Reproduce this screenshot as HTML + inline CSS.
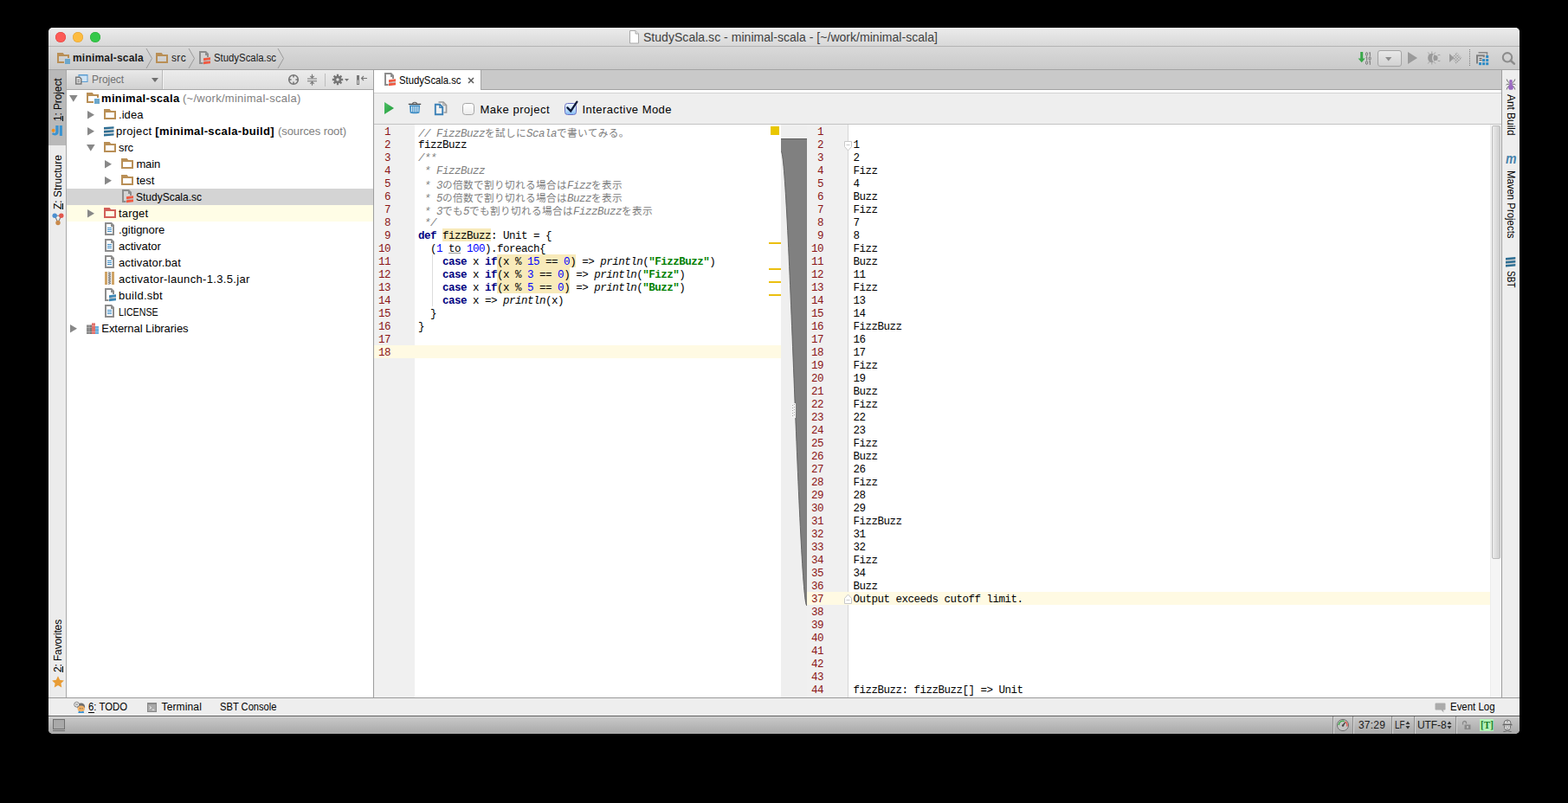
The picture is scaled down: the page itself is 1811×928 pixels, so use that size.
<!DOCTYPE html>
<html><head><meta charset="utf-8"><title>StudyScala.sc - minimal-scala</title>
<style>
html,body{margin:0;padding:0;background:#000;}
body{width:1811px;height:928px;position:relative;overflow:hidden;font-family:"Liberation Sans",sans-serif;}
.c{position:absolute;white-space:pre;font-family:"Liberation Mono",monospace;font-size:12.5px;line-height:15px;height:15px;letter-spacing:-0.5px;color:#000;}
.ln{position:absolute;white-space:pre;font-family:"Liberation Mono",monospace;font-size:12.5px;line-height:15px;height:15px;letter-spacing:-0.5px;color:#8a1414;text-align:right;}
.k{color:#000080;font-weight:bold}.n{color:#0000ff}.s{color:#008000;font-weight:bold}.cm{color:#808080;font-style:italic}.i{font-style:italic}
.j{display:inline-block;white-space:nowrap;font-family:"Liberation Sans","Noto Sans CJK JP",sans-serif;font-size:11.6px;letter-spacing:0.4px;line-height:15px;color:#808080;font-style:normal;}
.hl{}.u{text-decoration:underline;text-decoration-color:#999;text-decoration-thickness:1px;text-underline-offset:1px}
</style></head><body>
<div style="position:absolute;left:56px;top:32px;width:1699px;height:816px;background:#eeeeee;border-radius:5px;overflow:hidden;">
</div>
<div style="position:absolute;left:56px;top:32px;width:1699px;height:21px;background:linear-gradient(#ececec,#d8d8d8);border-radius:5px 5px 0 0;"></div>
<div style="position:absolute;left:56px;top:53px;width:1699px;height:1px;background:#b4b4b4;"></div>
<div style="position:absolute;left:64px;top:37px;width:12px;height:12px;border-radius:50%;background:#fc5b57;box-shadow:inset 0 0 0 0.5px #df3d39;"></div>
<div style="position:absolute;left:84px;top:37px;width:12px;height:12px;border-radius:50%;background:#fdbc40;box-shadow:inset 0 0 0 0.5px #de9f34;"></div>
<div style="position:absolute;left:104px;top:37px;width:12px;height:12px;border-radius:50%;background:#34c84a;box-shadow:inset 0 0 0 0.5px #27aa35;"></div>
<svg style="position:absolute;left:726px;top:35px;" width="13" height="16" viewBox="0 0 13 16"><path d="M1.5 0.5h6.5l3.5 3.5v11h-10z" fill="#fff" stroke="#a9a9a9" stroke-width="1"/><path d="M8 0.5v3.5h3.5" fill="#e4e4e4" stroke="#a9a9a9" stroke-width="1"/></svg>
<div style="position:absolute;white-space:pre;font-family:'Liberation Sans', sans-serif;font-size:14px;font-weight:normal;color:#404040;line-height:18px;height:18px;letter-spacing:0.036px;left:743px;top:34.0px;">StudyScala.sc - minimal-scala - [~/work/minimal-scala]</div>
<div style="position:absolute;left:56px;top:54px;width:1699px;height:26px;background:linear-gradient(#d9d9d9,#cacaca);"></div>
<div style="position:absolute;left:56px;top:80px;width:1699px;height:1px;background:#a3a3a3;"></div>
<div style="position:absolute;left:56px;top:81px;width:20px;height:725px;background:#ececec;"></div>
<div style="position:absolute;left:56px;top:81px;width:20px;height:87px;background:#b9b9b9;"></div>
<div style="position:absolute;left:76px;top:81px;width:1px;height:725px;background:#a9a9a9;"></div>
<div style="position:absolute;left:77px;top:81px;width:354px;height:22px;background:linear-gradient(#ececec,#dddddd);"></div>
<div style="position:absolute;left:77px;top:103px;width:354px;height:1px;background:#a8a8a8;"></div>
<div style="position:absolute;left:77px;top:104px;width:354px;height:702px;background:#ffffff;"></div>
<div style="position:absolute;left:431px;top:81px;width:1px;height:725px;background:#9d9d9d;"></div>
<div style="position:absolute;left:432px;top:81px;width:1302px;height:22px;background:#c9c9c9;"></div>
<div style="position:absolute;left:432px;top:103px;width:1302px;height:1px;background:#a2a2a2;"></div>
<div style="position:absolute;left:432px;top:104px;width:1302px;height:3px;background:#ffffff;"></div>
<div style="position:absolute;left:432px;top:107px;width:1302px;height:1px;background:#d2d2d2;"></div>
<div style="position:absolute;left:432px;top:108px;width:1302px;height:35px;background:#eeeeee;"></div>
<div style="position:absolute;left:432px;top:143px;width:1302px;height:1px;background:#c3c3c3;"></div>
<div style="position:absolute;left:432px;top:81px;width:123px;height:23px;background:#ffffff;"></div>
<div style="position:absolute;left:555px;top:81px;width:1px;height:22px;background:#a2a2a2;"></div>
<div style="position:absolute;left:432px;top:144px;width:47px;height:662px;background:#f0f0f0;"></div>
<div style="position:absolute;left:479px;top:144px;width:423px;height:662px;background:#ffffff;"></div>
<div style="position:absolute;left:902px;top:144px;width:30px;height:662px;background:#efefef;"></div>
<div style="position:absolute;left:932px;top:144px;width:47px;height:662px;background:#f0f0f0;"></div>
<div style="position:absolute;left:979px;top:144px;width:1px;height:662px;background:#d6d6d6;"></div>
<div style="position:absolute;left:980px;top:144px;width:741px;height:662px;background:#ffffff;"></div>
<div style="position:absolute;left:1721px;top:144px;width:13px;height:662px;background:#f5f5f5;"></div>
<div style="position:absolute;left:1721px;top:144px;width:1px;height:662px;background:#ececec;"></div>
<div style="position:absolute;left:1734px;top:81px;width:1px;height:725px;background:#9d9d9d;"></div>
<div style="position:absolute;left:1735px;top:81px;width:20px;height:725px;background:#eeeeee;"></div>
<div style="position:absolute;left:56px;top:806px;width:1699px;height:1px;background:#9a9a9a;"></div>
<div style="position:absolute;left:56px;top:807px;width:1699px;height:20px;background:#eeeeee;"></div>
<div style="position:absolute;left:56px;top:827px;width:1699px;height:1px;background:#5c5c5c;"></div>
<div style="position:absolute;left:56px;top:828px;width:1699px;height:20px;background:linear-gradient(#dadada 0,#dadada 1px,#c7c7c7 1.500px,#aaaaaa 19px,#b4b4b4 20px);border-radius:0 0 5px 5px;"></div>
<svg style="position:absolute;left:66px;top:59px;" width="16" height="16" viewBox="0 0 16 16"><path fill-rule="evenodd" d="M0 2h6.600l1.600 2H14v4H12V6H2v6h6v2H0z" fill="#b98f56"/><rect x="9" y="9" width="6" height="6" fill="#6ba7cc"/></svg>
<div style="position:absolute;white-space:pre;font-family:'Liberation Sans', sans-serif;font-size:12px;font-weight:bold;color:#1a1a1a;line-height:16px;height:16px;letter-spacing:0.202px;left:84px;top:59.0px;">minimal-scala</div>
<svg style="position:absolute;left:180px;top:59px;" width="16" height="16" viewBox="0 0 16 16"><path fill-rule="evenodd" d="M0 2h6.600l1.600 2H14v10H0zM2 6v6h10V6z" fill="#b98f56"/></svg>
<div style="position:absolute;white-space:pre;font-family:'Liberation Sans', sans-serif;font-size:12px;font-weight:normal;color:#1a1a1a;line-height:16px;height:16px;letter-spacing:0.333px;left:198px;top:59.0px;">src</div>
<svg style="position:absolute;left:229px;top:59px;" width="16" height="16" viewBox="0 0 16 16"><path fill-rule="evenodd" d="M1 0h8l3 3v4H10V5H8V2H3v11h2.500v2H1z" fill="#8d8d8d"/><path d="M6 8.200l8-1v3l-8 1zM6 12.200l8-1v3l-8 1z" fill="#f05a42"/><path d="M6 11.200l8-1v1l-8 1z" fill="#b9b9b9"/></svg>
<div style="position:absolute;white-space:pre;font-family:'Liberation Sans', sans-serif;font-size:12px;font-weight:normal;color:#1a1a1a;line-height:16px;height:16px;letter-spacing:0.000px;left:247px;top:59.0px;transform-origin:0 50%;transform:scaleX(0.9468);">StudyScala.sc</div>
<svg style="position:absolute;left:168px;top:55px;" width="9" height="25" viewBox="0 0 9 25"><path d="M1 1l6.5 11.5L1 24" fill="none" stroke="#9a9a9a" stroke-width="1"/></svg>
<svg style="position:absolute;left:217px;top:55px;" width="9" height="25" viewBox="0 0 9 25"><path d="M1 1l6.5 11.5L1 24" fill="none" stroke="#9a9a9a" stroke-width="1"/></svg>
<svg style="position:absolute;left:320px;top:55px;" width="9" height="25" viewBox="0 0 9 25"><path d="M1 1l6.5 11.5L1 24" fill="none" stroke="#9a9a9a" stroke-width="1"/></svg>
<div style="position:absolute;left:77px;top:81px;width:110px;height:22px;background:linear-gradient(#e9e9e9,#d1d1d1);"></div>
<div style="position:absolute;left:187px;top:81px;width:1px;height:22px;background:#b9b9b9;"></div>
<div style="position:absolute;left:188px;top:81px;width:1px;height:22px;background:#f2f2f2;"></div>
<svg style="position:absolute;left:86px;top:85px;" width="16" height="14" viewBox="0 0 16 14"><rect x="5" y="1.500" width="10" height="8" fill="#cfe4f5" stroke="#5a9bd0" stroke-width="1"/><rect x="5" y="1" width="10" height="1.500" fill="#5a9bd0"/><path d="M1.700 4.200h4.300l1.800 1.800v6H1.700z" fill="#dedede" stroke="#7a7a7a" stroke-width="1.500"/><path d="M3.500 7.500h2.500M3.500 9.500h2.500" stroke="#7a7a7a" stroke-width="1"/></svg>
<div style="position:absolute;white-space:pre;font-family:'Liberation Sans', sans-serif;font-size:12px;font-weight:normal;color:#707070;line-height:16px;height:16px;letter-spacing:-0.051px;left:106px;top:84.0px;">Project</div>
<svg style="position:absolute;left:175px;top:90px;" width="8" height="5" viewBox="0 0 8 5"><path d="M0 0h8l-4 5z" fill="#6e6e6e"/></svg>
<svg style="position:absolute;left:332px;top:85px;" width="14" height="14" viewBox="0 0 14 14"><circle cx="7" cy="7" r="5.300" fill="none" stroke="#767676" stroke-width="1.600"/><path d="M7 2v2.600M7 12v-2.600M2 7h2.600M12 7h-2.600" stroke="#767676" stroke-width="1.500"/></svg>
<svg style="position:absolute;left:354px;top:85px;" width="13" height="14" viewBox="0 0 13 14"><path d="M1 6h11M1 8.700h11" stroke="#767676" stroke-width="1.100"/><path d="M6.500 0.800v4.200M4.300 2.800l2.200 2.200 2.200-2.200M6.500 13.800v-4.200M4.300 11.800l2.200-2.200 2.200 2.200" fill="none" stroke="#767676" stroke-width="1.100"/></svg>
<div style="position:absolute;left:375px;top:85px;width:1px;height:15px;background:#bdbdbd;"></div>
<svg style="position:absolute;left:383px;top:85px;" width="14" height="14" viewBox="0 0 14 14"><g stroke="#767676" stroke-width="2.300"><path d="M7 0.800v12.400M0.800 7h12.400M2.600 2.600l8.800 8.800M11.400 2.600l-8.800 8.800"/></g><circle cx="7" cy="7" r="4.300" fill="#767676"/><circle cx="7" cy="7" r="1.700" fill="#e3e3e3"/></svg>
<svg style="position:absolute;left:398px;top:91px;" width="5" height="3" viewBox="0 0 5 3"><path d="M0 0h5l-2.500 3z" fill="#767676"/></svg>
<svg style="position:absolute;left:412px;top:86px;" width="13" height="13" viewBox="0 0 13 13"><rect x="0" y="1" width="3" height="11" fill="#767676"/><rect x="0.900" y="6.500" width="1.200" height="4.600" fill="#d6d6d6"/><path d="M12 4.500h-6.500M8 2l-2.500 2.500 2.500 2.500" fill="none" stroke="#767676" stroke-width="1.100"/></svg>
<div style="position:absolute;left:77px;top:218px;width:354px;height:19px;background:#d4d4d4;"></div>
<div style="position:absolute;left:77px;top:237px;width:354px;height:19px;background:#fffde6;"></div>
<svg style="position:absolute;left:80px;top:110px;" width="10" height="8" viewBox="0 0 10 8"><path d="M0 0h9.600l-4.800 7.800z" fill="#888888"/></svg>
<svg style="position:absolute;left:100px;top:105px;" width="16" height="16" viewBox="0 0 16 16"><path fill-rule="evenodd" d="M0 2h6.600l1.600 2H14v4H12V6H2v6h6v2H0z" fill="#b98f56"/><rect x="9" y="9" width="6" height="6" fill="#6ba7cc"/></svg>
<div style="position:absolute;white-space:pre;font-family:'Liberation Sans', sans-serif;font-size:13px;font-weight:bold;color:#000;line-height:17px;height:17px;letter-spacing:0.346px;left:117px;top:105.0px;">minimal-scala</div>
<div style="position:absolute;white-space:pre;font-family:'Liberation Sans', sans-serif;font-size:13px;font-weight:normal;color:#808080;line-height:17px;height:17px;letter-spacing:0.278px;left:211px;top:105.0px;">(~/work/minimal-scala)</div>
<svg style="position:absolute;left:101px;top:128px;" width="9" height="10" viewBox="0 0 9 10"><path d="M0 0v9.600l8-4.800z" fill="#888888"/></svg>
<svg style="position:absolute;left:120px;top:124px;" width="16" height="16" viewBox="0 0 16 16"><path fill-rule="evenodd" d="M0 2h6.600l1.600 2H14v10H0zM2 6v6h10V6z" fill="#b98f56"/></svg>
<div style="position:absolute;white-space:pre;font-family:'Liberation Sans', sans-serif;font-size:13px;font-weight:normal;color:#000;line-height:17px;height:17px;letter-spacing:0.059px;left:137px;top:124.0px;">.idea</div>
<svg style="position:absolute;left:101px;top:147px;" width="9" height="10" viewBox="0 0 9 10"><path d="M0 0v9.600l8-4.800z" fill="#888888"/></svg>
<svg style="position:absolute;left:120px;top:143px;" width="16" height="16" viewBox="0 0 16 16"><path d="M0 5.600l11.500-0.900v6.500l-11.500 0.900z" fill="#dcdcdc"/><path d="M0 4.100l11.500-0.900v2.400l-11.500 0.900zM0 8.100l11.500-0.900v2.400l-11.500 0.900zM0 12.100l11.500-0.900v2.400l-11.500 0.900z" fill="#2e6e93"/></svg>
<div style="position:absolute;white-space:pre;font-family:'Liberation Sans', sans-serif;font-size:13px;font-weight:normal;color:#000;line-height:17px;height:17px;letter-spacing:0.353px;left:134px;top:143.0px;">project</div>
<div style="position:absolute;white-space:pre;font-family:'Liberation Sans', sans-serif;font-size:13px;font-weight:bold;color:#000;line-height:17px;height:17px;letter-spacing:0.365px;left:179.3px;top:143.0px;">[minimal-scala-build]</div>
<div style="position:absolute;white-space:pre;font-family:'Liberation Sans', sans-serif;font-size:13px;font-weight:normal;color:#808080;line-height:17px;height:17px;letter-spacing:-0.086px;left:321px;top:143.0px;">(sources root)</div>
<svg style="position:absolute;left:100px;top:167px;" width="10" height="8" viewBox="0 0 10 8"><path d="M0 0h9.600l-4.800 7.800z" fill="#888888"/></svg>
<svg style="position:absolute;left:120px;top:162px;" width="16" height="16" viewBox="0 0 16 16"><path fill-rule="evenodd" d="M0 2h6.600l1.600 2H14v10H0zM2 6v6h10V6z" fill="#b98f56"/></svg>
<div style="position:absolute;white-space:pre;font-family:'Liberation Sans', sans-serif;font-size:13px;font-weight:normal;color:#000;line-height:17px;height:17px;letter-spacing:-0.115px;left:137px;top:162.0px;">src</div>
<svg style="position:absolute;left:121px;top:185px;" width="9" height="10" viewBox="0 0 9 10"><path d="M0 0v9.600l8-4.800z" fill="#888888"/></svg>
<svg style="position:absolute;left:140px;top:181px;" width="16" height="16" viewBox="0 0 16 16"><path fill-rule="evenodd" d="M0 2h6.600l1.600 2H14v10H0zM2 6v6h10V6z" fill="#b98f56"/></svg>
<div style="position:absolute;white-space:pre;font-family:'Liberation Sans', sans-serif;font-size:13px;font-weight:normal;color:#000;line-height:17px;height:17px;letter-spacing:-0.147px;left:157.4px;top:181.0px;">main</div>
<svg style="position:absolute;left:121px;top:204px;" width="9" height="10" viewBox="0 0 9 10"><path d="M0 0v9.600l8-4.800z" fill="#888888"/></svg>
<svg style="position:absolute;left:140px;top:200px;" width="16" height="16" viewBox="0 0 16 16"><path fill-rule="evenodd" d="M0 2h6.600l1.600 2H14v10H0zM2 6v6h10V6z" fill="#b98f56"/></svg>
<div style="position:absolute;white-space:pre;font-family:'Liberation Sans', sans-serif;font-size:13px;font-weight:normal;color:#000;line-height:17px;height:17px;letter-spacing:0.008px;left:157.4px;top:200.0px;">test</div>
<svg style="position:absolute;left:140px;top:219px;" width="16" height="16" viewBox="0 0 16 16"><path fill-rule="evenodd" d="M1 0h8l3 3v4H10V5H8V2H3v11h2.500v2H1z" fill="#8d8d8d"/><path d="M6 8.200l8-1v3l-8 1zM6 12.200l8-1v3l-8 1z" fill="#f05a42"/><path d="M6 11.200l8-1v1l-8 1z" fill="#b9b9b9"/></svg>
<div style="position:absolute;white-space:pre;font-family:'Liberation Sans', sans-serif;font-size:13px;font-weight:normal;color:#000;line-height:17px;height:17px;letter-spacing:0.000px;left:157px;top:219.0px;transform-origin:0 50%;transform:scaleX(0.9226);">StudyScala.sc</div>
<svg style="position:absolute;left:101px;top:242px;" width="9" height="10" viewBox="0 0 9 10"><path d="M0 0v9.600l8-4.800z" fill="#888888"/></svg>
<svg style="position:absolute;left:120px;top:238px;" width="16" height="16" viewBox="0 0 16 16"><path fill-rule="evenodd" d="M0 2h6.600l1.600 2H14v10H0zM2 6v6h10V6z" fill="#d25f58"/></svg>
<div style="position:absolute;white-space:pre;font-family:'Liberation Sans', sans-serif;font-size:13px;font-weight:normal;color:#000;line-height:17px;height:17px;letter-spacing:0.175px;left:137px;top:238.0px;">target</div>
<svg style="position:absolute;left:120px;top:257px;" width="16" height="16" viewBox="0 0 16 16"><path fill-rule="evenodd" d="M1 0h8l3 3v12H1zM3 2v11h7V5H8V2z" fill="#8d8d8d"/><path d="M4 6.500h5M4 8.500h5M4 10.500h5" stroke="#3d8ec9" stroke-width="1"/></svg>
<div style="position:absolute;white-space:pre;font-family:'Liberation Sans', sans-serif;font-size:13px;font-weight:normal;color:#000;line-height:17px;height:17px;letter-spacing:-0.018px;left:137px;top:257.0px;">.gitignore</div>
<svg style="position:absolute;left:120px;top:276px;" width="16" height="16" viewBox="0 0 16 16"><path fill-rule="evenodd" d="M1 0h8l3 3v12H1zM3 2v11h7V5H8V2z" fill="#8d8d8d"/><path d="M4 6.500h5M4 8.500h5M4 10.500h5" stroke="#3d8ec9" stroke-width="1"/></svg>
<div style="position:absolute;white-space:pre;font-family:'Liberation Sans', sans-serif;font-size:13px;font-weight:normal;color:#000;line-height:17px;height:17px;letter-spacing:-0.038px;left:137px;top:276.0px;">activator</div>
<svg style="position:absolute;left:120px;top:295px;" width="16" height="16" viewBox="0 0 16 16"><path fill-rule="evenodd" d="M1 0h8l3 3v12H1zM3 2v11h7V5H8V2z" fill="#8d8d8d"/><path d="M4 6.500h5M4 8.500h5M4 10.500h5" stroke="#3d8ec9" stroke-width="1"/></svg>
<div style="position:absolute;white-space:pre;font-family:'Liberation Sans', sans-serif;font-size:13px;font-weight:normal;color:#000;line-height:17px;height:17px;letter-spacing:0.145px;left:137px;top:295.0px;">activator.bat</div>
<svg style="position:absolute;left:120px;top:314px;" width="16" height="16" viewBox="0 0 16 16"><rect x="1" y="0" width="3" height="15" fill="#cfa467"/><rect x="9" y="0" width="3" height="15" fill="#cfa467"/><rect x="4" y="0" width="5" height="15" fill="#f4f4f4"/><path d="M5 0.500l3 1-3 1 3 1-3 1 3 1-3 1 3 1-3 1 3 1-3 1 3 1-3 1 3 1-3 1" fill="none" stroke="#555" stroke-width="0.700"/></svg>
<div style="position:absolute;white-space:pre;font-family:'Liberation Sans', sans-serif;font-size:13px;font-weight:normal;color:#000;line-height:17px;height:17px;letter-spacing:0.328px;left:137px;top:314.0px;">activator-launch-1.3.5.jar</div>
<svg style="position:absolute;left:120px;top:333px;" width="16" height="16" viewBox="0 0 16 16"><path fill-rule="evenodd" d="M1 0h8l3 3v4H10V5H8V2H3v11h2.500v2H1z" fill="#8d8d8d"/><path d="M6 8.200l8-1v3l-8 1zM6 12.200l8-1v3l-8 1z" fill="#3f88b5"/><path d="M6 11.200l8-1v1l-8 1z" fill="#b9b9b9"/></svg>
<div style="position:absolute;white-space:pre;font-family:'Liberation Sans', sans-serif;font-size:13px;font-weight:normal;color:#000;line-height:17px;height:17px;letter-spacing:0.286px;left:137px;top:333.0px;">build.sbt</div>
<svg style="position:absolute;left:120px;top:352px;" width="16" height="16" viewBox="0 0 16 16"><path fill-rule="evenodd" d="M1 0h8l3 3v12H1zM3 2v11h7V5H8V2z" fill="#8d8d8d"/><path d="M4 6.500h5M4 8.500h5M4 10.500h5" stroke="#3d8ec9" stroke-width="1"/></svg>
<div style="position:absolute;white-space:pre;font-family:'Liberation Sans', sans-serif;font-size:13px;font-weight:normal;color:#000;line-height:17px;height:17px;letter-spacing:0.000px;left:137px;top:352.0px;transform-origin:0 50%;transform:scaleX(0.8195);">LICENSE</div>
<svg style="position:absolute;left:81px;top:375px;" width="9" height="10" viewBox="0 0 9 10"><path d="M0 0v9.600l8-4.800z" fill="#888888"/></svg>
<svg style="position:absolute;left:100px;top:371px;" width="16" height="16" viewBox="0 0 16 16"><rect x="0" y="4.500" width="3" height="10.500" fill="#8a8a8a"/><rect x="3.200" y="4.500" width="2.800" height="10.500" fill="#7a7a7a"/><rect x="6" y="2.400" width="4" height="12.600" fill="#e0706a"/><rect x="10" y="6" width="4" height="9" fill="#6ab0de"/><path d="M0 7.500h6M0 12.500h6M6 5.500h4M6 12.500h4M10 8.500h4M10 12.500h4" stroke="#fff" stroke-opacity="0.350" stroke-width="0.800"/></svg>
<div style="position:absolute;white-space:pre;font-family:'Liberation Sans', sans-serif;font-size:13px;font-weight:normal;color:#000;line-height:17px;height:17px;letter-spacing:-0.053px;left:117.3px;top:371.0px;">External Libraries</div>
<svg style="position:absolute;left:1568px;top:58px;" width="10" height="16" viewBox="0 0 10 16"><path d="M3.200 2h3v7.600h2.600l-4.100 4.600-4.100-4.600h2.600z" fill="#3aa84a"/></svg>
<svg style="position:absolute;left:1577px;top:59.5px;" width="8" height="5" viewBox="0 0 8 5"><ellipse cx="1.50" cy="2.500" rx="1.050" ry="1.900" fill="none" stroke="#6a6a6a" stroke-width="0.900"/><path d="M4.20 1.300l1.100-0.800v4.400" fill="none" stroke="#6a6a6a" stroke-width="0.900"/></svg>
<svg style="position:absolute;left:1577px;top:64.5px;" width="8" height="5" viewBox="0 0 8 5"><path d="M0.60 1.300l1.100-0.800v4.400" fill="none" stroke="#6a6a6a" stroke-width="0.900"/><ellipse cx="5.10" cy="2.500" rx="1.050" ry="1.900" fill="none" stroke="#6a6a6a" stroke-width="0.900"/></svg>
<svg style="position:absolute;left:1577px;top:69.5px;" width="8" height="5" viewBox="0 0 8 5"><ellipse cx="1.50" cy="2.500" rx="1.050" ry="1.900" fill="none" stroke="#6a6a6a" stroke-width="0.900"/><path d="M4.20 1.300l1.100-0.800v4.400" fill="none" stroke="#6a6a6a" stroke-width="0.900"/></svg>
<div style="position:absolute;left:1591px;top:58px;width:28px;height:19px;background:linear-gradient(#e8e8e8,#d2d2d2);border:1px solid #a3a3a3;border-radius:3px;box-sizing:border-box;"></div>
<svg style="position:absolute;left:1600px;top:66px;" width="8" height="5" viewBox="0 0 8 5"><path d="M0 0h7.400l-3.700 4.400z" fill="#8c8c8c"/></svg>
<svg style="position:absolute;left:1626px;top:60px;" width="12" height="14" viewBox="0 0 12 14"><path d="M0 0v14l11-7z" fill="#9a9a9a"/></svg>
<svg style="position:absolute;left:1647px;top:59px;" width="18" height="16" viewBox="0 0 18 16"><ellipse cx="6.700" cy="8" rx="4.600" ry="5.300" fill="#9a9a9a"/><ellipse cx="11" cy="8" rx="2.600" ry="3.100" fill="#9a9a9a"/><path d="M10.700 2.500a6.500 6.500 0 0 0 0 11" fill="none" stroke="#d1d1d1" stroke-width="1.300"/><path d="M13.600 4.800q1.600-0.900 2.800 0M13.600 11.200q1.600 0.900 2.800 0" fill="none" stroke="#9a9a9a" stroke-width="0.900"/><path d="M4 3.700l-1.700-2.200M6.800 2.800v-2.300M9.300 3.500l1.500-2M4 12.300l-1.700 2.200M6.800 13.200v2.300M9.300 12.500l1.500 2" stroke="#9a9a9a" stroke-width="0.900" fill="none"/></svg>
<svg style="position:absolute;left:1673px;top:60px;" width="16" height="14" viewBox="0 0 16 14"><defs><pattern id="chk" width="2.400" height="2.400" patternUnits="userSpaceOnUse" patternTransform="rotate(45)"><rect width="1.500" height="1.500" fill="#9a9a9a"/></pattern></defs><path d="M1 2v10l5.500-5z" fill="#9a9a9a"/><path d="M9 0l6.500 7-6.500 7-5-7z" fill="url(#chk)"/></svg>
<div style="position:absolute;left:1697px;top:57px;width:1px;height:1px;background:#7d7d7d;"></div>
<div style="position:absolute;left:1697px;top:59px;width:1px;height:1px;background:#7d7d7d;"></div>
<div style="position:absolute;left:1697px;top:61px;width:1px;height:1px;background:#7d7d7d;"></div>
<div style="position:absolute;left:1697px;top:63px;width:1px;height:1px;background:#7d7d7d;"></div>
<div style="position:absolute;left:1697px;top:65px;width:1px;height:1px;background:#7d7d7d;"></div>
<div style="position:absolute;left:1697px;top:67px;width:1px;height:1px;background:#7d7d7d;"></div>
<div style="position:absolute;left:1697px;top:69px;width:1px;height:1px;background:#7d7d7d;"></div>
<div style="position:absolute;left:1697px;top:71px;width:1px;height:1px;background:#7d7d7d;"></div>
<div style="position:absolute;left:1697px;top:73px;width:1px;height:1px;background:#7d7d7d;"></div>
<div style="position:absolute;left:1697px;top:75px;width:1px;height:1px;background:#7d7d7d;"></div>
<svg style="position:absolute;left:1704px;top:59px;" width="17" height="17" viewBox="0 0 17 17"><path d="M3.500 1.700h10v3" fill="none" stroke="#888" stroke-width="1.500"/><path d="M2 14.500v-9.200h7.800v2" fill="none" stroke="#808080" stroke-width="2"/><path d="M4.500 8.500h3M4.500 10.500h3" stroke="#555" stroke-width="1"/><g fill="#2b8ac6"><rect x="12.200" y="5" width="3" height="3"/><rect x="8.100" y="9.100" width="3" height="3"/><rect x="12.200" y="9.100" width="3" height="3"/><rect x="4" y="13.200" width="3" height="3"/><rect x="8.100" y="13.200" width="3" height="3"/><rect x="12.200" y="13.200" width="3" height="3"/></g></svg>
<svg style="position:absolute;left:1734px;top:59px;" width="17" height="17" viewBox="0 0 17 17"><circle cx="7" cy="7.300" r="5.200" fill="none" stroke="#8c8c8c" stroke-width="2.100"/><path d="M10.800 11l4 3.600" stroke="#8c8c8c" stroke-width="2.600" stroke-linecap="round"/></svg>
<svg style="position:absolute;left:443px;top:84px;" width="16" height="16" viewBox="0 0 16 16"><path fill-rule="evenodd" d="M1 0h8l3 3v4H10V5H8V2H3v11h2.500v2H1z" fill="#8d8d8d"/><path d="M6 8.200l8-1v3l-8 1zM6 12.200l8-1v3l-8 1z" fill="#f05a42"/><path d="M6 11.200l8-1v1l-8 1z" fill="#b9b9b9"/></svg>
<div style="position:absolute;white-space:pre;font-family:'Liberation Sans', sans-serif;font-size:12px;font-weight:normal;color:#000;line-height:16px;height:16px;letter-spacing:0.000px;left:461px;top:84.5px;transform-origin:0 50%;transform:scaleX(0.9402);">StudyScala.sc</div>
<svg style="position:absolute;left:540px;top:89px;" width="8" height="8" viewBox="0 0 8 8"><path d="M1 1l6 6M7 1l-6 6" stroke="#5a5a5a" stroke-width="1.500"/></svg>
<svg style="position:absolute;left:444px;top:118px;" width="11" height="14" viewBox="0 0 11 14"><defs><linearGradient id="pg" x1="0" y1="0" x2="1" y2="1"><stop offset="0" stop-color="#4fc068"/><stop offset="1" stop-color="#1d9a36"/></linearGradient></defs><path d="M0 0v14l11-7z" fill="url(#pg)"/></svg>
<svg style="position:absolute;left:471px;top:116px;" width="16" height="17" viewBox="0 0 16 17"><path d="M5.700 4c0-2.300 4.600-2.300 4.600 0" fill="none" stroke="#5a5a5a" stroke-width="1.100"/><path d="M0.800 4.400h14.400" stroke="#4a4a4a" stroke-width="1.300"/><path d="M2 5.600h12l-0.600 8.600c-0.100 1.500-10.700 1.500-10.800 0z" fill="#3f8dc4"/><path d="M4.600 7v6.300M7 7v6.600M9.400 7v6.600M11.700 7v6.300" stroke="#eaf3fa" stroke-width="1.150"/></svg>
<svg style="position:absolute;left:501px;top:116px;" width="16" height="18" viewBox="0 0 16 18"><path d="M5.500 2h5.500l3.500 3.500v8.500h-3" fill="none" stroke="#9c9c9c" stroke-width="1.700"/><path d="M10.800 2.300v3.400h3.400" fill="none" stroke="#9c9c9c" stroke-width="1"/><path d="M1.800 4.800h5.200l3.200 3.200v8.200H1.800z" fill="#f1f1f1" stroke="#3b80b6" stroke-width="1.900"/><path d="M6.800 5v3.400h3.400" fill="none" stroke="#3b80b6" stroke-width="1.200"/></svg>
<div style="position:absolute;left:534px;top:119px;width:14px;height:14px;background:linear-gradient(#ffffff,#ececec);border:1px solid #a5a5a5;border-radius:3.500px;box-sizing:border-box;"></div>
<div style="position:absolute;white-space:pre;font-family:'Liberation Sans', sans-serif;font-size:13px;font-weight:normal;color:#000;line-height:17px;height:17px;letter-spacing:0.507px;left:554.5px;top:118.0px;">Make project</div>
<div style="position:absolute;left:652px;top:119px;width:14px;height:14px;background:linear-gradient(#eef6ff,#cfe5fb 45%,#86bdf4);border:1px solid #686fc4;border-radius:3.500px;box-sizing:border-box;"></div>
<svg style="position:absolute;left:652px;top:114px;" width="17" height="19" viewBox="0 0 17 19"><path d="M3.300 10.400L7.200 14.400L14.400 3.700" fill="none" stroke="#0c1838" stroke-width="2.300" stroke-linecap="round" stroke-linejoin="miter"/></svg>
<div style="position:absolute;white-space:pre;font-family:'Liberation Sans', sans-serif;font-size:13px;font-weight:normal;color:#000;line-height:17px;height:17px;letter-spacing:0.462px;left:672.5px;top:118.0px;">Interactive Mode</div>
<div style="position:absolute;left:432px;top:399px;width:470px;height:15px;background:#fffae3;"></div>
<div style="position:absolute;left:932px;top:684px;width:789px;height:15px;background:#fffae3;"></div>
<div style="position:absolute;left:511px;top:264px;width:56px;height:15px;background:#f8eaba;"></div>
<div style="position:absolute;left:574px;top:294px;width:91px;height:15px;background:#f8eaba;"></div>
<div style="position:absolute;left:574px;top:309px;width:84px;height:30px;background:#f8eaba;"></div>
<div style="position:absolute;left:499px;top:294px;width:1px;height:60px;background:#dcdcdc;"></div>
<div class="ln" style="left:421px;width:30px;top:146px;">1</div>
<div class="ln" style="left:421px;width:30px;top:161px;">2</div>
<div class="ln" style="left:421px;width:30px;top:176px;">3</div>
<div class="ln" style="left:421px;width:30px;top:191px;">4</div>
<div class="ln" style="left:421px;width:30px;top:206px;">5</div>
<div class="ln" style="left:421px;width:30px;top:221px;">6</div>
<div class="ln" style="left:421px;width:30px;top:236px;">7</div>
<div class="ln" style="left:421px;width:30px;top:251px;">8</div>
<div class="ln" style="left:421px;width:30px;top:266px;">9</div>
<div class="ln" style="left:421px;width:30px;top:281px;">10</div>
<div class="ln" style="left:421px;width:30px;top:296px;">11</div>
<div class="ln" style="left:421px;width:30px;top:311px;">12</div>
<div class="ln" style="left:421px;width:30px;top:326px;">13</div>
<div class="ln" style="left:421px;width:30px;top:341px;">14</div>
<div class="ln" style="left:421px;width:30px;top:356px;">15</div>
<div class="ln" style="left:421px;width:30px;top:371px;">16</div>
<div class="ln" style="left:421px;width:30px;top:386px;">17</div>
<div class="ln" style="left:421px;width:30px;top:401px;">18</div>
<div class="ln" style="left:921px;width:30px;top:146px;">1</div>
<div class="ln" style="left:921px;width:30px;top:161px;">2</div>
<div class="ln" style="left:921px;width:30px;top:176px;">3</div>
<div class="ln" style="left:921px;width:30px;top:191px;">4</div>
<div class="ln" style="left:921px;width:30px;top:206px;">5</div>
<div class="ln" style="left:921px;width:30px;top:221px;">6</div>
<div class="ln" style="left:921px;width:30px;top:236px;">7</div>
<div class="ln" style="left:921px;width:30px;top:251px;">8</div>
<div class="ln" style="left:921px;width:30px;top:266px;">9</div>
<div class="ln" style="left:921px;width:30px;top:281px;">10</div>
<div class="ln" style="left:921px;width:30px;top:296px;">11</div>
<div class="ln" style="left:921px;width:30px;top:311px;">12</div>
<div class="ln" style="left:921px;width:30px;top:326px;">13</div>
<div class="ln" style="left:921px;width:30px;top:341px;">14</div>
<div class="ln" style="left:921px;width:30px;top:356px;">15</div>
<div class="ln" style="left:921px;width:30px;top:371px;">16</div>
<div class="ln" style="left:921px;width:30px;top:386px;">17</div>
<div class="ln" style="left:921px;width:30px;top:401px;">18</div>
<div class="ln" style="left:921px;width:30px;top:416px;">19</div>
<div class="ln" style="left:921px;width:30px;top:431px;">20</div>
<div class="ln" style="left:921px;width:30px;top:446px;">21</div>
<div class="ln" style="left:921px;width:30px;top:461px;">22</div>
<div class="ln" style="left:921px;width:30px;top:476px;">23</div>
<div class="ln" style="left:921px;width:30px;top:491px;">24</div>
<div class="ln" style="left:921px;width:30px;top:506px;">25</div>
<div class="ln" style="left:921px;width:30px;top:521px;">26</div>
<div class="ln" style="left:921px;width:30px;top:536px;">27</div>
<div class="ln" style="left:921px;width:30px;top:551px;">28</div>
<div class="ln" style="left:921px;width:30px;top:566px;">29</div>
<div class="ln" style="left:921px;width:30px;top:581px;">30</div>
<div class="ln" style="left:921px;width:30px;top:596px;">31</div>
<div class="ln" style="left:921px;width:30px;top:611px;">32</div>
<div class="ln" style="left:921px;width:30px;top:626px;">33</div>
<div class="ln" style="left:921px;width:30px;top:641px;">34</div>
<div class="ln" style="left:921px;width:30px;top:656px;">35</div>
<div class="ln" style="left:921px;width:30px;top:671px;">36</div>
<div class="ln" style="left:921px;width:30px;top:686px;">37</div>
<div class="ln" style="left:921px;width:30px;top:701px;">38</div>
<div class="ln" style="left:921px;width:30px;top:716px;">39</div>
<div class="ln" style="left:921px;width:30px;top:731px;">40</div>
<div class="ln" style="left:921px;width:30px;top:746px;">41</div>
<div class="ln" style="left:921px;width:30px;top:761px;">42</div>
<div class="ln" style="left:921px;width:30px;top:776px;">43</div>
<div class="ln" style="left:921px;width:30px;top:791px;">44</div>
<div class="c" style="left:483px;top:146px;"><span class="cm">// FizzBuzz</span><span class="j" style="width:48px">を試しに</span><span class="cm">Scala</span><span class="j" style="width:84px">で書いてみる。</span></div>
<div class="c" style="left:483px;top:161px;"><span>fizzBuzz</span></div>
<div class="c" style="left:483px;top:176px;"><span class="cm">/</span><span class="cm" style="display:inline-block;width:14.0px">**</span></div>
<div class="c" style="left:483px;top:191px;"><span class="cm"> </span><span class="cm" style="display:inline-block;width:7.0px">*</span><span class="cm"> FizzBuzz</span></div>
<div class="c" style="left:483px;top:206px;"><span class="cm"> </span><span class="cm" style="display:inline-block;width:7.0px">*</span><span class="cm"> 3</span><span class="j" style="width:144px">の倍数で割り切れる場合は</span><span class="cm">Fizz</span><span class="j" style="width:36px">を表示</span></div>
<div class="c" style="left:483px;top:221px;"><span class="cm"> </span><span class="cm" style="display:inline-block;width:7.0px">*</span><span class="cm"> 5</span><span class="j" style="width:144px">の倍数で割り切れる場合は</span><span class="cm">Buzz</span><span class="j" style="width:36px">を表示</span></div>
<div class="c" style="left:483px;top:236px;"><span class="cm"> </span><span class="cm" style="display:inline-block;width:7.0px">*</span><span class="cm"> 3</span><span class="j" style="width:24px">でも</span><span class="cm">5</span><span class="j" style="width:120px">でも割り切れる場合は</span><span class="cm">FizzBuzz</span><span class="j" style="width:36px">を表示</span></div>
<div class="c" style="left:483px;top:251px;"><span class="cm"> </span><span class="cm" style="display:inline-block;width:7.0px">*</span><span class="cm">/</span></div>
<div class="c" style="left:483px;top:266px;"><span class="k">def</span><span> </span><span class="hl">fizzBuzz</span><span>: Unit = {</span></div>
<div class="c" style="left:483px;top:281px;"><span>  (</span><span class="n">1</span><span> </span><span class="u">to</span><span> </span><span class="n">100</span><span>).foreach{</span></div>
<div class="c" style="left:483px;top:296px;"><span>    </span><span class="k">case</span><span> x </span><span class="k">if</span><span class="hl">(x % </span><span class="hl n">15</span><span class="hl"> == </span><span class="hl n">0</span><span class="hl">)</span><span> =&gt; </span><span class="i">println</span><span>(</span><span class="s">&quot;FizzBuzz&quot;</span><span>)</span></div>
<div class="c" style="left:483px;top:311px;"><span>    </span><span class="k">case</span><span> x </span><span class="k">if</span><span class="hl">(x % </span><span class="hl n">3</span><span class="hl"> == </span><span class="hl n">0</span><span class="hl">)</span><span> =&gt; </span><span class="i">println</span><span>(</span><span class="s">&quot;Fizz&quot;</span><span>)</span></div>
<div class="c" style="left:483px;top:326px;"><span>    </span><span class="k">case</span><span> x </span><span class="k">if</span><span class="hl">(x % </span><span class="hl n">5</span><span class="hl"> == </span><span class="hl n">0</span><span class="hl">)</span><span> =&gt; </span><span class="i">println</span><span>(</span><span class="s">&quot;Buzz&quot;</span><span>)</span></div>
<div class="c" style="left:483px;top:341px;"><span>    </span><span class="k">case</span><span> x =&gt; </span><span class="i">println</span><span>(x)</span></div>
<div class="c" style="left:483px;top:356px;"><span>  }</span></div>
<div class="c" style="left:483px;top:371px;"><span>}</span></div>
<div class="c" style="left:985.5px;top:161px;"><span>1</span></div>
<div class="c" style="left:985.5px;top:176px;"><span>2</span></div>
<div class="c" style="left:985.5px;top:191px;"><span>Fizz</span></div>
<div class="c" style="left:985.5px;top:206px;"><span>4</span></div>
<div class="c" style="left:985.5px;top:221px;"><span>Buzz</span></div>
<div class="c" style="left:985.5px;top:236px;"><span>Fizz</span></div>
<div class="c" style="left:985.5px;top:251px;"><span>7</span></div>
<div class="c" style="left:985.5px;top:266px;"><span>8</span></div>
<div class="c" style="left:985.5px;top:281px;"><span>Fizz</span></div>
<div class="c" style="left:985.5px;top:296px;"><span>Buzz</span></div>
<div class="c" style="left:985.5px;top:311px;"><span>11</span></div>
<div class="c" style="left:985.5px;top:326px;"><span>Fizz</span></div>
<div class="c" style="left:985.5px;top:341px;"><span>13</span></div>
<div class="c" style="left:985.5px;top:356px;"><span>14</span></div>
<div class="c" style="left:985.5px;top:371px;"><span>FizzBuzz</span></div>
<div class="c" style="left:985.5px;top:386px;"><span>16</span></div>
<div class="c" style="left:985.5px;top:401px;"><span>17</span></div>
<div class="c" style="left:985.5px;top:416px;"><span>Fizz</span></div>
<div class="c" style="left:985.5px;top:431px;"><span>19</span></div>
<div class="c" style="left:985.5px;top:446px;"><span>Buzz</span></div>
<div class="c" style="left:985.5px;top:461px;"><span>Fizz</span></div>
<div class="c" style="left:985.5px;top:476px;"><span>22</span></div>
<div class="c" style="left:985.5px;top:491px;"><span>23</span></div>
<div class="c" style="left:985.5px;top:506px;"><span>Fizz</span></div>
<div class="c" style="left:985.5px;top:521px;"><span>Buzz</span></div>
<div class="c" style="left:985.5px;top:536px;"><span>26</span></div>
<div class="c" style="left:985.5px;top:551px;"><span>Fizz</span></div>
<div class="c" style="left:985.5px;top:566px;"><span>28</span></div>
<div class="c" style="left:985.5px;top:581px;"><span>29</span></div>
<div class="c" style="left:985.5px;top:596px;"><span>FizzBuzz</span></div>
<div class="c" style="left:985.5px;top:611px;"><span>31</span></div>
<div class="c" style="left:985.5px;top:626px;"><span>32</span></div>
<div class="c" style="left:985.5px;top:641px;"><span>Fizz</span></div>
<div class="c" style="left:985.5px;top:656px;"><span>34</span></div>
<div class="c" style="left:985.5px;top:671px;"><span>Buzz</span></div>
<div class="c" style="left:985.5px;top:686px;"><span>Output exceeds cutoff limit.</span></div>
<div class="c" style="left:985.5px;top:791px;"><span>fizzBuzz: fizzBuzz[] =&gt; Unit</span></div>
<div style="position:absolute;left:890px;top:146px;width:10px;height:10px;background:#e9c700;"></div>
<div style="position:absolute;left:888px;top:280px;width:14px;height:2px;background:#ebbf10;"></div>
<div style="position:absolute;left:888px;top:310px;width:14px;height:2px;background:#ebbf10;"></div>
<div style="position:absolute;left:888px;top:325px;width:14px;height:2px;background:#ebbf10;"></div>
<div style="position:absolute;left:888px;top:340px;width:14px;height:2px;background:#ebbf10;"></div>
<svg style="position:absolute;left:902px;top:144px;" width="30" height="662" viewBox="0 0 30 662"><path d="M0 16H30V556C21 556 9 31 0 31Z" fill="#808080"/><path d="M0 16.500H30M30 556C21 556 9 31 0 31" fill="none" stroke="#5c5c5c" stroke-width="0.900"/><rect x="12" y="322" width="5" height="17" fill="#f3f3f3"/><g fill="#a6a6a6"><rect x="13" y="324" width="1" height="1"/><rect x="13" y="327" width="1" height="1"/><rect x="13" y="330" width="1" height="1"/><rect x="13" y="333" width="1" height="1"/><rect x="13" y="336" width="1" height="1"/><rect x="15" y="323" width="1" height="1"/><rect x="15" y="326" width="1" height="1"/><rect x="15" y="329" width="1" height="1"/><rect x="15" y="332" width="1" height="1"/><rect x="15" y="335" width="1" height="1"/></g></svg>
<svg style="position:absolute;left:975px;top:163px;" width="10" height="12" viewBox="0 0 10 12"><path d="M0.500 0.500h8v6l-4 4.500-4-4.500z" fill="#fff" stroke="#c8c8c8" stroke-width="1"/><path d="M2.500 4.500h4" stroke="#c8c8c8" stroke-width="1"/></svg>
<svg style="position:absolute;left:975px;top:686px;" width="10" height="12" viewBox="0 0 10 12"><path d="M0.500 11.500h8v-6l-4-4.500-4 4.500z" fill="#fff" stroke="#c8c8c8" stroke-width="1"/><path d="M2.500 7.500h4" stroke="#c8c8c8" stroke-width="1"/></svg>
<div style="position:absolute;left:1723px;top:145px;width:10px;height:501px;background:linear-gradient(90deg,#ececec,#cecece);border:1px solid #bcbcbc;border-radius:2px;box-sizing:border-box;"></div>
<div style="position:absolute;white-space:pre;font-family:'Liberation Sans', sans-serif;font-size:12px;font-weight:normal;color:#000;line-height:16px;height:16px;letter-spacing:-0.120px;left:58.5px;top:139.5px;transform-origin:0 0;transform:rotate(-90deg);">1: Project</div>
<div style="position:absolute;left:71.5px;top:133px;width:0px;height:0px;background:none;"></div>
<svg style="position:absolute;left:59px;top:144px;" width="14" height="14" viewBox="0 0 14 14"><path d="M5.300 1h3.300v7.800c0 4.200-5.600 4.600-7.800 2.300l1.600-1.900c1.300 1.300 2.900 0.900 2.900-0.900z" fill="#3a93d0"/><rect x="9.800" y="1" width="3.100" height="12" fill="#3a93d0"/><circle cx="2.600" cy="6.800" r="2" fill="#f0901f"/></svg>
<div style="position:absolute;white-space:pre;font-family:'Liberation Sans', sans-serif;font-size:12px;font-weight:normal;color:#000;line-height:16px;height:16px;letter-spacing:0.026px;left:58.5px;top:242px;transform-origin:0 0;transform:rotate(-90deg);">Z: Structure</div>
<svg style="position:absolute;left:60px;top:246px;" width="14" height="15" viewBox="0 0 14 15"><path d="M3.200 3.200L7 11.500 10.800 3.200z" fill="none" stroke="#7a7a7a" stroke-width="1.100"/><circle cx="3.200" cy="3.200" r="2.700" fill="#4b8fd0"/><circle cx="10.800" cy="3.200" r="2.700" fill="#e2574c"/><circle cx="7" cy="11.500" r="2.700" fill="#c98a4b"/></svg>
<div style="position:absolute;white-space:pre;font-family:'Liberation Sans', sans-serif;font-size:12px;font-weight:normal;color:#000;line-height:16px;height:16px;letter-spacing:-0.142px;left:58.5px;top:776.5px;transform-origin:0 0;transform:rotate(-90deg);">2: Favorites</div>
<svg style="position:absolute;left:60px;top:781px;" width="14" height="14" viewBox="0 0 14 14"><path d="M7 0.300l2.100 4.500 4.800 0.600-3.500 3.300 0.900 4.800L7 11.100 2.700 13.500l0.900-4.800L0.100 5.400l4.800-0.600z" fill="#e89c35"/></svg>
<div style="position:absolute;left:72px;top:134px;width:1px;height:6px;background:#000;"></div>
<div style="position:absolute;left:72px;top:235px;width:1px;height:7px;background:#000;"></div>
<div style="position:absolute;left:72px;top:770px;width:1px;height:7px;background:#000;"></div>
<svg style="position:absolute;left:1739px;top:91px;" width="12" height="13" viewBox="0 0 12 13"><g stroke="#4a4a4a" stroke-width="0.800" fill="none"><path d="M4.800 5.200L2.300 3.200L1.200 0.500M7.200 5.200L9.700 3.200L10.800 0.500M4.300 6.300H1.500L0.300 7.500M7.700 6.300H10.500L11.700 7.500M4.800 7.300L2.300 9.500L1.200 12.500M7.200 7.300L9.700 9.500L10.800 12.500"/></g><circle cx="6" cy="2.900" r="1.900" fill="#9a68c2"/><circle cx="6" cy="6" r="1.800" fill="#9a68c2"/><circle cx="6" cy="9.900" r="2.900" fill="#9a68c2"/></svg>
<div style="position:absolute;white-space:pre;font-family:'Liberation Sans', sans-serif;font-size:12px;font-weight:normal;color:#000;line-height:16px;height:16px;letter-spacing:-0.059px;left:1752.5px;top:108.5px;transform-origin:0 0;transform:rotate(90deg);">Ant Build</div>
<div style="position:absolute;white-space:pre;font-family:'Liberation Sans', sans-serif;font-size:17px;font-weight:normal;color:#4682ab;line-height:21px;height:21px;letter-spacing:0.000px;font-style:italic;font-weight:bold;left:1738.5px;top:172.9px;transform-origin:0 50%;transform:scaleX(0.8264);">m</div>
<div style="position:absolute;white-space:pre;font-family:'Liberation Sans', sans-serif;font-size:12px;font-weight:normal;color:#000;line-height:16px;height:16px;letter-spacing:0.000px;left:1752.5px;top:196.5px;transform-origin:0 0;transform:rotate(90deg) scaleX(0.9492);">Maven Projects</div>
<svg style="position:absolute;left:1739px;top:296px;" width="12" height="13" viewBox="0 0 12 13"><path d="M0 3.600l11.300-0.900v6.500l-11.300 0.900z" fill="#d4d4d4"/><path d="M0 2l11.300-0.900v2.500l-11.300 0.900zM0 6l11.300-0.900v2.500l-11.300 0.900zM0 10l11.300-0.900v2.500l-11.300 0.900z" fill="#2e6e93"/></svg>
<div style="position:absolute;white-space:pre;font-family:'Liberation Sans', sans-serif;font-size:12px;font-weight:normal;color:#000;line-height:16px;height:16px;letter-spacing:0.000px;left:1752.5px;top:313px;transform-origin:0 0;transform:rotate(90deg) scaleX(0.8353);">SBT</div>
<svg style="position:absolute;left:85px;top:810px;" width="14" height="14" viewBox="0 0 14 14"><path d="M4.300 6.800a4.400 4.200 0 0 1 8.800 0v1.500h-8.800z" fill="#6e6e6e"/><ellipse cx="8.700" cy="8.900" rx="4.100" ry="3.500" fill="#f2b266"/><path d="M5.200 14l0.800-2.300q2.700 1.600 5.400 0l0.800 2.300z" fill="#2f8fd6"/><circle cx="3.600" cy="4.200" r="2.900" fill="#fff" stroke="#6e6e6e" stroke-width="0.900"/><path d="M2.200 3.600h2.800M2.200 4.900h2.800" stroke="#6e6e6e" stroke-width="0.700"/><circle cx="7.500" cy="8.800" r="0.550" fill="#333"/><circle cx="9.900" cy="8.800" r="0.550" fill="#333"/></svg>
<div style="position:absolute;white-space:pre;font-family:'Liberation Sans', sans-serif;font-size:12px;font-weight:normal;color:#000;line-height:16px;height:16px;letter-spacing:0.000px;left:102px;top:809.0px;transform-origin:0 50%;transform:scaleX(0.9458);">6: TODO</div>
<div style="position:absolute;left:102px;top:823px;width:7px;height:1px;background:#000;"></div>
<svg style="position:absolute;left:170px;top:812px;" width="11" height="11" viewBox="0 0 11 11"><rect x="0.500" y="0.500" width="10" height="10" fill="#a9a9a9" stroke="#8a8a8a" stroke-width="1"/><rect x="0" y="0" width="11" height="2" fill="#8a8a8a"/><path d="M2.700 4.300l2 1.500-2 1.500M5.700 8.200h2.600" stroke="#f4f4f4" stroke-width="1" fill="none"/></svg>
<div style="position:absolute;white-space:pre;font-family:'Liberation Sans', sans-serif;font-size:12px;font-weight:normal;color:#000;line-height:16px;height:16px;letter-spacing:0.143px;left:186.5px;top:809.0px;">Terminal</div>
<div style="position:absolute;white-space:pre;font-family:'Liberation Sans', sans-serif;font-size:12px;font-weight:normal;color:#000;line-height:16px;height:16px;letter-spacing:0.000px;left:254px;top:809.0px;transform-origin:0 50%;transform:scaleX(0.9293);">SBT Console</div>
<svg style="position:absolute;left:1657px;top:812px;" width="13" height="12" viewBox="0 0 13 12"><path d="M1.500 0.500h10a1 1 0 0 1 1 1v6a1 1 0 0 1-1 1H10l0.500 3-3-3H1.500a1 1 0 0 1-1-1v-6a1 1 0 0 1 1-1z" fill="#ababab"/></svg>
<div style="position:absolute;white-space:pre;font-family:'Liberation Sans', sans-serif;font-size:12px;font-weight:normal;color:#000;line-height:16px;height:16px;letter-spacing:0.000px;left:1674.5px;top:809.0px;transform-origin:0 50%;transform:scaleX(0.9529);">Event Log</div>
<div style="position:absolute;left:61px;top:831px;width:14px;height:12px;background:#a9a9a9;border:1px solid #6f6f6f;box-sizing:border-box;"></div>
<div style="position:absolute;left:61px;top:844px;width:14px;height:1px;background:#6f6f6f;"></div>
<div style="position:absolute;left:1539px;top:828px;width:1px;height:20px;background:#8f8f8f;"></div>
<div style="position:absolute;left:1540px;top:828px;width:1px;height:20px;background:#d4d4d4;"></div>
<div style="position:absolute;left:1562px;top:828px;width:1px;height:20px;background:#8f8f8f;"></div>
<div style="position:absolute;left:1563px;top:828px;width:1px;height:20px;background:#d4d4d4;"></div>
<div style="position:absolute;left:1607px;top:828px;width:1px;height:20px;background:#8f8f8f;"></div>
<div style="position:absolute;left:1608px;top:828px;width:1px;height:20px;background:#d4d4d4;"></div>
<div style="position:absolute;left:1633px;top:828px;width:1px;height:20px;background:#8f8f8f;"></div>
<div style="position:absolute;left:1634px;top:828px;width:1px;height:20px;background:#d4d4d4;"></div>
<div style="position:absolute;left:1681px;top:828px;width:1px;height:20px;background:#8f8f8f;"></div>
<div style="position:absolute;left:1682px;top:828px;width:1px;height:20px;background:#d4d4d4;"></div>
<svg style="position:absolute;left:1543px;top:830px;" width="16" height="16" viewBox="0 0 16 16"><circle cx="8" cy="8" r="6.600" fill="#c4c4c4" stroke="#6f6f6f" stroke-width="1"/><path d="M3.200 8a4.800 4.800 0 0 1 6.500-4.500" fill="none" stroke="#3aa845" stroke-width="1.400"/><path d="M10.500 3.900a4.800 4.800 0 0 1 2.200 5.600" fill="none" stroke="#e2574c" stroke-width="1.400"/><path d="M8 8.500l2.500-3.500" stroke="#444" stroke-width="1.300"/><circle cx="8" cy="8.500" r="1.200" fill="#444"/></svg>
<div style="position:absolute;white-space:pre;font-family:'Liberation Sans', sans-serif;font-size:12px;font-weight:normal;color:#1a1a1a;line-height:16px;height:16px;letter-spacing:0.194px;left:1569px;top:829.5px;">37:29</div>
<div style="position:absolute;white-space:pre;font-family:'Liberation Sans', sans-serif;font-size:12px;font-weight:normal;color:#1a1a1a;line-height:16px;height:16px;letter-spacing:0.000px;left:1611px;top:829.5px;transform-origin:0 50%;transform:scaleX(0.8205);">LF</div>
<svg style="position:absolute;left:1623px;top:833px;" width="6" height="10" viewBox="0 0 6 10"><path d="M3 0.500l2.500 3.500h-5zM3 9.500l2.500-3.500h-5z" fill="#333"/></svg>
<div style="position:absolute;white-space:pre;font-family:'Liberation Sans', sans-serif;font-size:12px;font-weight:normal;color:#1a1a1a;line-height:16px;height:16px;letter-spacing:-0.100px;left:1637px;top:829.5px;">UTF-8</div>
<svg style="position:absolute;left:1671px;top:833px;" width="6" height="10" viewBox="0 0 6 10"><path d="M3 0.500l2.500 3.500h-5zM3 9.500l2.500-3.500h-5z" fill="#333"/></svg>
<svg style="position:absolute;left:1688px;top:832px;" width="12" height="12" viewBox="0 0 12 12"><path d="M1.500 5.500v-2a2 2 0 0 1 4 0v1" fill="none" stroke="#8a8a8a" stroke-width="1.300"/><rect x="3.500" y="5.500" width="7" height="5.500" fill="#8a8a8a"/><rect x="6.300" y="7" width="1.400" height="2.500" fill="#d0d0d0"/></svg>
<div style="position:absolute;left:1709px;top:831px;width:16px;height:14px;background:#b4f2b7;"></div>
<div style="position:absolute;white-space:pre;font-family:'Liberation Serif', serif;font-size:12px;font-weight:bold;color:#1e7a2e;line-height:16px;height:16px;letter-spacing:0.000px;left:1709.5px;top:830.0px;transform-origin:0 50%;transform:scaleX(0.9375);">[T]</div>
<svg style="position:absolute;left:1734px;top:830px;" width="14" height="16" viewBox="0 0 14 16"><path d="M3 6a4 4 0 0 1 8 0v1H3z" fill="#d9d9d9" stroke="#666" stroke-width="0.900"/><path d="M7 2.500v2.500" stroke="#666" stroke-width="0.900"/><rect x="1.500" y="7" width="11" height="1.300" fill="#666"/><path d="M3.500 8.500v3l2 2.500h3l2-2.500v-3" fill="#e4e4e4" stroke="#666" stroke-width="0.900"/><path d="M4.500 10h2M7.500 10h2M5.500 12.500q1.500-1 3 0" stroke="#666" stroke-width="0.800" fill="none"/><path d="M2 16q5-3 10 0" stroke="#666" stroke-width="0.900" fill="none"/></svg>
</body></html>
